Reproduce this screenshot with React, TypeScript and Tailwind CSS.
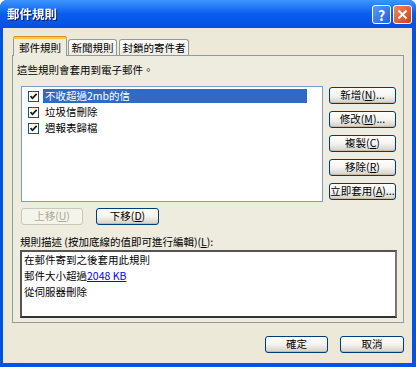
import React from 'react';

const font = { fontFamily: '"Noto Sans CJK TC", "Noto Sans CJK JP", sans-serif' };

function XpButton({
  label,
  className = '',
  disabled = false,
}: {
  label: React.ReactNode;
  className?: string;
  disabled?: boolean;
}) {
  return (
    <div
      className={`h-[17px] rounded-[3px] border flex items-center justify-center whitespace-nowrap text-[10.5px] leading-none ${
        disabled
          ? 'border-[#C9C7BA] bg-[#F5F4EA] text-[#ACA899]'
          : 'border-[#003C74] bg-linear-to-b from-white via-[#F4F3EE] to-[#D6D0C5] text-black shadow-[inset_0_-1px_0_#C0BDB0]'
      } ${className}`}
    >
      {label}
    </div>
  );
}

function CheckBox() {
  return (
    <div className="w-[11px] h-[11px] border border-[#1C5180] bg-white flex items-center justify-center shrink-0">
      <svg width="9" height="9" viewBox="0 0 9 9">
        <path d="M1.5 4.2 L3.5 6.3 L7.6 1.8" stroke="#1a1a1a" strokeWidth="1.8" fill="none" />
      </svg>
    </div>
  );
}

const rules = ['不收超過2mb的信', '垃圾信刪除', '週報表歸檔'];

export default function App() {
  return (
    <div className="w-[416px] h-[367px] flex flex-col bg-[#0054E3] rounded-t-[7px] overflow-hidden" style={font}>
      {/* Title bar */}
      <div className="h-[28px] shrink-0 flex items-center pl-[7px] pr-[4px] bg-linear-to-b from-[#3D95FF] via-[#0A5CEF] to-[#0650E0]">
        <span className="text-white font-bold text-[12.5px] drop-shadow-[1px_1px_0_#0A1E6A] flex-1">郵件規則</span>
        <div className="flex gap-[2px] mt-[1px]">
          <div className="w-[19px] h-[19px] rounded-[3px] border border-white bg-linear-to-br from-[#5A9BFF] to-[#1E5FE0] flex items-center justify-center text-white font-bold text-[14px] leading-none">
            ?
          </div>
          <div className="w-[19px] h-[19px] rounded-[3px] border border-white bg-linear-to-br from-[#F0895F] to-[#D23C0C] flex items-center justify-center">
            <svg width="11" height="11" viewBox="0 0 11 11">
              <path d="M1.5 1.5 L9.5 9.5 M9.5 1.5 L1.5 9.5" stroke="white" strokeWidth="2" />
            </svg>
          </div>
        </div>
      </div>

      {/* Client area */}
      <div className="flex-1 ml-[3px] mr-[4px] mb-[4px] bg-[#ECE9D8] flex flex-col text-[10.5px] text-black whitespace-nowrap">
        {/* Tabs */}
        <div className="flex items-end h-[27px] pl-[10px] pt-[8px] shrink-0">
          <div className="relative z-10 w-[54px] h-[20px] -mb-px bg-[#EEEBDF] border border-b-0 border-[#919B9C] rounded-t-[3px] flex items-center justify-center">
            <div className="absolute -top-px -left-px -right-px h-[3px] rounded-t-[3px] bg-[#FFC83C] border-t border-[#E68B2C]" />
            <span className="mt-[2px]">郵件規則</span>
          </div>
          <div className="w-[49px] h-[16px] ml-px bg-linear-to-b from-white to-[#ECEBE6] border border-b-0 border-[#919B9C] rounded-t-[3px] flex items-center justify-center">
            新聞規則
          </div>
          <div className="w-[70px] h-[16px] ml-[2px] bg-linear-to-b from-white to-[#ECEBE6] border border-b-0 border-[#919B9C] rounded-t-[3px] flex items-center justify-center">
            封鎖的寄件者
          </div>
        </div>

        {/* Tab panel */}
        <div className="ml-[9px] w-[392px] h-[268px] border border-[#919B9C] bg-[#EEEBDF] flex flex-col shrink-0">
          <div className="h-[16px] mt-[6px] ml-[4px] leading-[16px]">這些規則會套用到電子郵件。</div>
          <div className="flex mt-[8px]">
            <div className="ml-[8px] w-[302px] h-[116px] border border-[#7F9DB9] bg-white pt-px">
              {rules.map((r, i) => (
                <div key={r} className="h-[16px] flex items-center pl-[6px]">
                  <CheckBox />
                  <span
                    className={`ml-[4px] h-[14px] leading-[14px] pl-[2px] ${
                      i === 0 ? 'bg-[#316AC5] text-white w-[264px]' : ''
                    }`}
                  >
                    {r}
                  </span>
                </div>
              ))}
            </div>
            <div className="ml-[6px] mt-px flex flex-col gap-[7px] w-[67px]">
              <XpButton label={<>新增(<u>N</u>)...</>} />
              <XpButton label={<>修改(<u>M</u>)...</>} />
              <XpButton label={<>複製(<u>C</u>)</>} />
              <XpButton label={<>移除(<u>R</u>)</>} />
              <XpButton label={<>立即套用(<u>A</u>)...</>} />
            </div>
          </div>
          <div className="flex mt-[6px] ml-[8px] gap-[13px]">
            <XpButton disabled className="w-[62px]" label={<>上移(<u>U</u>)</>} />
            <XpButton className="w-[63px]" label={<>下移(<u>D</u>)</>} />
          </div>
          <div className="ml-[7px] mt-[9px] h-[16px] leading-[16px]">
            規則描述 (按加底線的值即可進行編輯)(<u>L</u>):
          </div>
          <div className="ml-[7px] w-[377px] h-[68px] border-2 border-t-[#555] border-l-[#555] border-r-[#777] border-b-[#333] bg-white px-[2px] leading-[16px]">
            <div>在郵件寄到之後套用此規則</div>
            <div>
              郵件大小超過<span className="text-[#0000FF] underline">2048 KB</span>
            </div>
            <div>從伺服器刪除</div>
          </div>
        </div>

        {/* Footer */}
        <div className="flex justify-end gap-[12px] mt-[13px] mr-[8px]">
          <XpButton className="w-[63px]" label="確定" />
          <XpButton className="w-[64px]" label="取消" />
        </div>
      </div>
    </div>
  );
}
